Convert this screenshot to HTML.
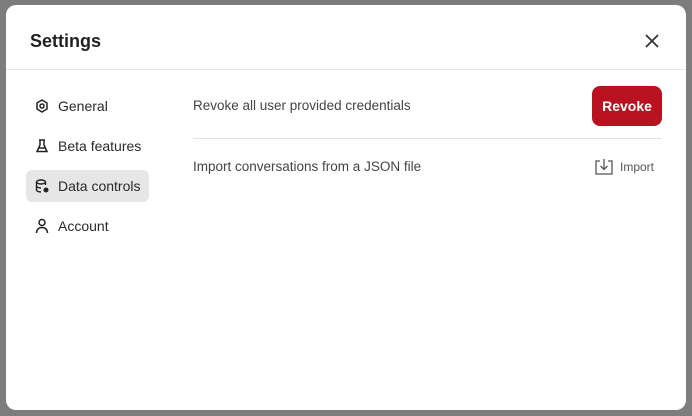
<!DOCTYPE html>
<html><head><style>
*{margin:0;padding:0;box-sizing:border-box}
body{width:692px;height:416px;background:#7d7d7d;font-family:"Liberation Sans",sans-serif;position:relative;overflow:hidden}
.m{position:absolute;left:6px;top:5px;width:680px;height:405px;background:#fff;border-radius:10px}
.t{position:absolute;left:24px;top:26px;font-size:18px;font-weight:bold;color:#222}
.x{position:absolute;left:638px;top:28px}
.hr{position:absolute;left:0;right:0;top:64px;height:1px;background:#e5e5e5}
.it{position:absolute;left:20px;width:123px;height:32px;border-radius:6px;font-size:14px;color:#2a2a2a;display:flex;align-items:center;padding-left:9px}
.it svg{margin-right:9px}
.sel{background:#e6e6e6}
.row{position:absolute;left:187px;font-size:13.5px;color:#444}
.btn{position:absolute;left:586px;top:81px;width:70px;height:40px;background:#b9111f;border-radius:8px;color:#fff;font-weight:bold;font-size:14px;display:flex;align-items:center;justify-content:center}
.sep{position:absolute;left:187px;width:469px;top:133px;height:1px;background:#e3e3e3}
.imp{position:absolute;left:588px;top:153px;display:flex;align-items:center;font-size:12px;color:#555}
</style></head><body>
<div class="m">
<div class="t">Settings</div>
<svg class="x" width="16" height="16" viewBox="0 0 16 16"><path d="M2 2L14 14M14 2L2 14" stroke="#333" stroke-width="1.8"/></svg>
<div class="hr"></div>
<div class="it" style="top:85px"><svg width="14" height="14" viewBox="0 0 14 14" fill="none" stroke="#222" stroke-width="1.5"><path d="M7 1l5 3v6l-5 3-5-3V4z"/><circle cx="7" cy="7" r="2"/></svg>General</div>
<div class="it" style="top:125px"><svg width="14" height="14" viewBox="0 0 14 14" fill="none" stroke="#222" stroke-width="1.5"><path d="M5 1v5L2 12.5h10L9 6V1M4 1h6M3.5 9h7"/></svg>Beta features</div>
<div class="it sel" style="top:165px"><svg width="14" height="14" viewBox="0 0 14 14" fill="none" stroke="#222" stroke-width="1.4"><ellipse cx="6" cy="3" rx="4.5" ry="2"/><path d="M1.5 3v8c0 1 2 2 4.5 2M10.5 3v3M1.5 7c0 1 2 2 4.5 2"/><circle cx="11" cy="11" r="1.8" fill="#222"/></svg>Data controls</div>
<div class="it" style="top:205px"><svg width="14" height="16" viewBox="0 0 14 16" fill="none" stroke="#222" stroke-width="1.5"><circle cx="7" cy="4.5" r="3"/><path d="M1.5 15c0-3.5 2.5-5.5 5.5-5.5s5.5 2 5.5 5.5"/></svg>Account</div>
<div class="row" style="top:93px">Revoke all user provided credentials</div>
<div class="btn">Revoke</div>
<div class="sep"></div>
<div class="row" style="top:154px">Import conversations from a JSON file</div>
<div class="imp"><svg width="20" height="18" viewBox="0 0 20 18" fill="none" stroke="#555" stroke-width="1.3"><path d="M6 3H2v13h16V3h-4M10 1v10M6.5 8l3.5 3.5L13.5 8"/></svg><span style="margin-left:6px">Import</span></div>
</div>
</body></html>
